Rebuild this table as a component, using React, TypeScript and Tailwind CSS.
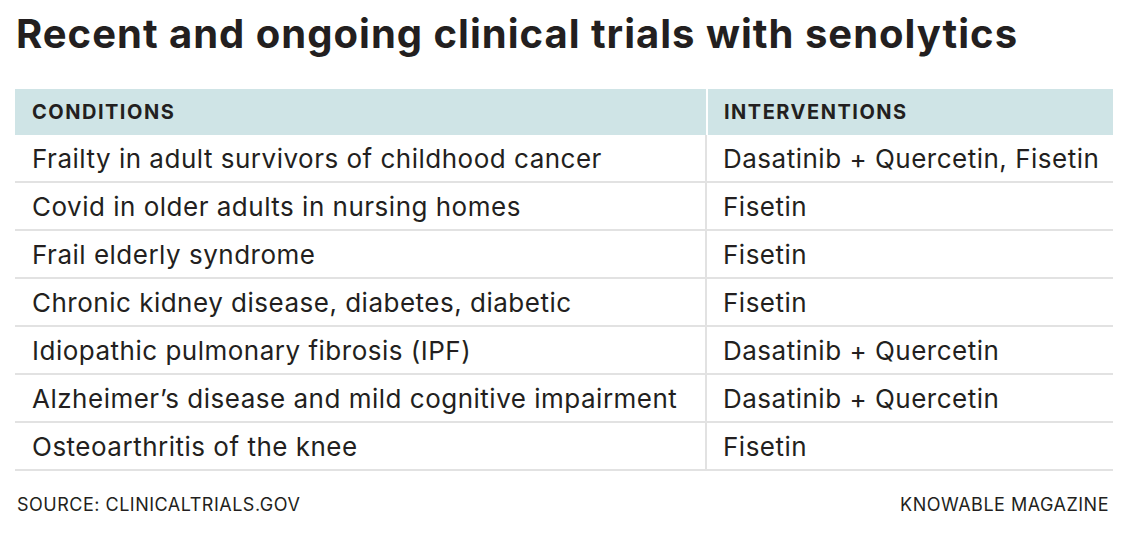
const rows: [string, string][] = [
  ['Frailty in adult survivors of childhood cancer', 'Dasatinib + Quercetin, Fisetin'],
  ['Covid in older adults in nursing homes', 'Fisetin'],
  ['Frail elderly syndrome', 'Fisetin'],
  ['Chronic kidney disease, diabetes, diabetic', 'Fisetin'],
  ['Idiopathic pulmonary fibrosis (IPF)', 'Dasatinib + Quercetin'],
  ['Alzheimer\u2019s disease and mild cognitive impairment', 'Dasatinib + Quercetin'],
  ['Osteoarthritis of the knee', 'Fisetin'],
];

export default function App() {
  return (
    <div className="h-[544px] w-[1128px] bg-white font-['Inter',sans-serif] text-[#231f20]">
      <h1 className="pl-[16px] pt-[10px] text-[40px] leading-[48px] font-bold tracking-[1px]">
        Recent and ongoing clinical trials with senolytics
      </h1>

      <div className="mt-[31px] ml-[15px] w-[1098px]">
        {/* header */}
        <div className="grid h-[46px] grid-cols-[691px_1fr] gap-x-[2px] text-[20px] font-bold tracking-[1.5px]">
          <div className="flex items-center bg-[#cfe4e6] pl-[17px]">CONDITIONS</div>
          <div className="flex items-center bg-[#cfe4e6] pl-[16px]">INTERVENTIONS</div>
        </div>

        {rows.map(([condition, intervention]) => (
          <div
            key={condition}
            className="grid h-[48px] grid-cols-[692px_1fr] border-b-2 border-[#e2e2e2] text-[26px] tracking-[0.5px]"
          >
            <div className="flex items-center border-r-2 border-[#e2e2e2] pl-[17px]">{condition}</div>
            <div className="flex items-center pl-[16px]">{intervention}</div>
          </div>
        ))}
      </div>

      <div className="mt-[20px] flex justify-between pl-[17px] pr-[19px] text-[18px] tracking-[0.5px]">
        <span>SOURCE: CLINICALTRIALS.GOV</span>
        <span>KNOWABLE MAGAZINE</span>
      </div>
    </div>
  );
}
